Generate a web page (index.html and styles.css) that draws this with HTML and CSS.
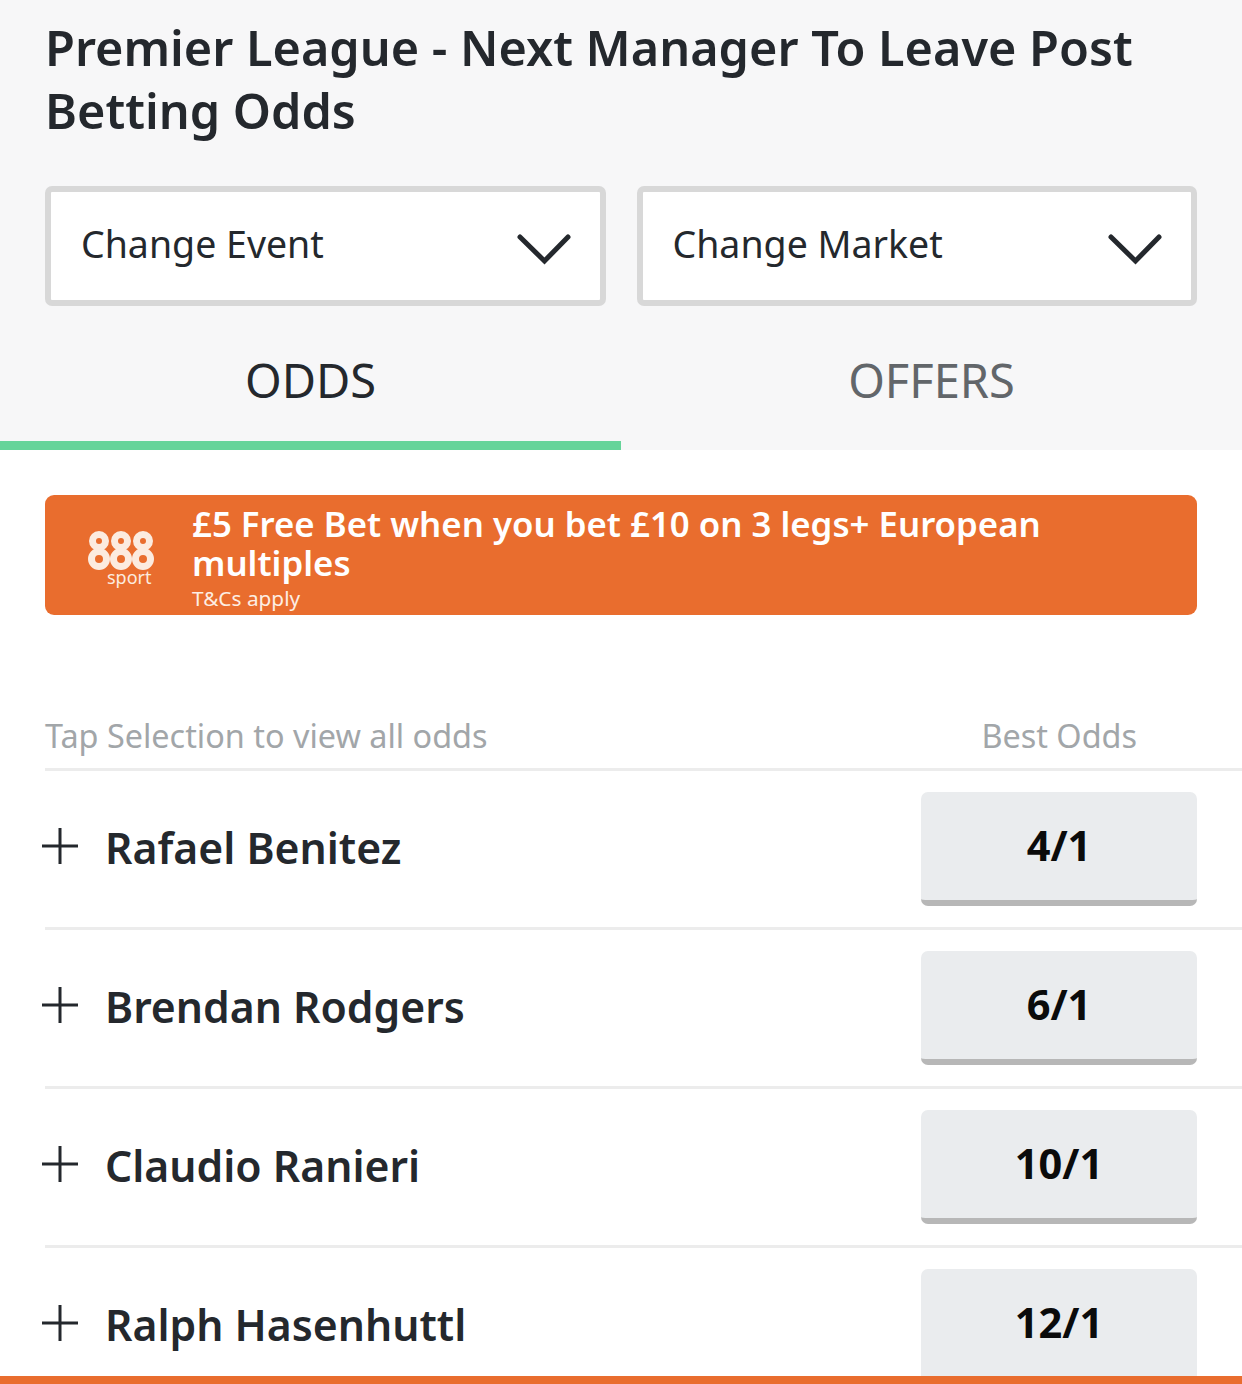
FILE: index.html
```html
<!DOCTYPE html>
<html lang="en">
<head>
<meta charset="utf-8">
<title>Premier League - Next Manager To Leave Post Betting Odds</title>
<link rel="stylesheet" href="styles.css">
</head>
<body>
<div class="page">
  <header class="head">
    <h1 class="title">Premier League - Next Manager To Leave Post Betting Odds</h1>
    <div class="selects">
      <div class="select"><span>Change Event</span>
        <svg class="chev" width="56" height="34" viewBox="0 0 56 34"><path d="M5 6 L29.5 30 L53 6" fill="none" stroke="#24282d" stroke-width="5" stroke-linecap="round"/></svg>
      </div>
      <div class="select"><span>Change Market</span>
        <svg class="chev" width="56" height="34" viewBox="0 0 56 34"><path d="M5 6 L29.5 30 L53 6" fill="none" stroke="#24282d" stroke-width="5" stroke-linecap="round"/></svg>
      </div>
    </div>
    <nav class="tabs">
      <div class="tab active">ODDS</div>
      <div class="tab">OFFERS</div>
    </nav>
  </header>
  <main class="main">
    <section class="promo">
      <div class="logo">
        <svg width="66" height="40" viewBox="0 0 66 40" fill="none" stroke="#fcebdf" stroke-width="7">
          <circle cx="11" cy="10" r="6.5"/><circle cx="11" cy="28" r="7.5"/>
          <circle cx="33" cy="10" r="6.5"/><circle cx="33" cy="28" r="7.5"/>
          <circle cx="55" cy="10" r="6.5"/><circle cx="55" cy="28" r="7.5"/>
        </svg>
        <span class="logo-sub">sport</span>
      </div>
      <div class="promo-text">
        <div class="promo-head">£5 Free Bet when you bet £10 on 3 legs+ European multiples</div>
        <div class="promo-terms">T&amp;Cs apply</div>
      </div>
    </section>
    <div class="list-head">
      <span>Tap Selection to view all odds</span>
      <span class="best">Best Odds</span>
    </div>
    <div class="row">
      <svg class="plus" width="38" height="38" viewBox="0 0 38 38"><path d="M19 1V37M1 19H37" stroke="#24282d" stroke-width="3"/></svg>
      <span class="name">Rafael Benitez</span>
      <div class="odds">4/1</div>
    </div>
    <div class="row">
      <svg class="plus" width="38" height="38" viewBox="0 0 38 38"><path d="M19 1V37M1 19H37" stroke="#24282d" stroke-width="3"/></svg>
      <span class="name">Brendan Rodgers</span>
      <div class="odds">6/1</div>
    </div>
    <div class="row">
      <svg class="plus" width="38" height="38" viewBox="0 0 38 38"><path d="M19 1V37M1 19H37" stroke="#24282d" stroke-width="3"/></svg>
      <span class="name">Claudio Ranieri</span>
      <div class="odds">10/1</div>
    </div>
    <div class="row">
      <svg class="plus" width="38" height="38" viewBox="0 0 38 38"><path d="M19 1V37M1 19H37" stroke="#24282d" stroke-width="3"/></svg>
      <span class="name">Ralph Hasenhuttl</span>
      <div class="odds">12/1</div>
    </div>
  </main>
  <div class="footer-bar"></div>
</div>
</body>
</html>
```
FILE: styles.css
```css
* { box-sizing: border-box; }
html, body { margin: 0; padding: 0; height: 100%; overflow: hidden; background: #fff; }
body { font-family: "Noto Sans", "Open Sans", sans-serif; color: #24282d; }
.page { position: relative; width: 1242px; height: 1384px; overflow: hidden; }

.head { background: #f7f7f8; height: 450px; display: flex; flex-direction: column; padding-top: 16px; }
.title { margin: 0 45px; font-size: 48.6px; line-height: 63px; font-weight: 600; height: 126px; }
.selects { display: flex; gap: 31px; margin: 44px 45px 0; }
.select { flex: 1; height: 120px; background: #fff; border: 6px solid #d8d8d8; border-radius: 7px; display: flex; align-items: center; justify-content: space-between; padding: 0 29px 5px 30px; font-size: 37.5px; }
.chev { display: block; margin-top: 9px; }
.tabs { display: flex; margin-top: auto; }
.tab { flex: 1; height: 110px; padding-bottom: 30px; display: flex; align-items: center; justify-content: center; font-size: 47px; color: #62666a; }
.tab.active { color: #24282d; box-shadow: inset 0 -9px 0 #66d49a; }

.main { padding: 45px 0 0 45px; }
.promo { width: 1152px; height: 120px; background: #e96d2e; border-radius: 9px; color: #fff; display: flex; align-items: flex-start; padding: 9px 20px 0 43px; }
.logo { width: 104px; flex: none; padding-top: 27px; display: flex; flex-direction: column; }
.logo svg { display: block; }
.logo-sub { font-size: 18px; line-height: 18px; color: #fcebdf; margin-left: 19px; margin-top: -3px; }
.promo-text { width: 900px; }
.promo-head { font-size: 34.8px; line-height: 39px; font-weight: 600; }
.promo-terms { font-size: 20.8px; line-height: 28px; margin-top: 2px; color: #fdeee3; }

.list-head { display: flex; justify-content: space-between; margin-top: 100px; height: 56px; padding-right: 105px; border-bottom: 3px solid #ececec; font-size: 32.4px; line-height: 40px; color: #a2a6a9; }
.row { position: relative; height: 159px; display: flex; align-items: flex-start; border-bottom: 3px solid #ececec; padding: 0 45px 0 0; }
.plus { position: absolute; left: -4px; top: 56px; }
.name { margin: 47px 0 0 60px; font-size: 42.7px; line-height: 60px; font-weight: 600; }
.odds { margin: 21px 0 0 auto; width: 276px; height: 114px; background: #eaecee; border-radius: 7px; border-bottom: 6px solid #b7b7b7; display: flex; align-items: center; justify-content: center; padding-bottom: 2px; font-family: "Open Sans", sans-serif; font-weight: 700; font-size: 41.5px; color: #0b0b0b; }
.footer-bar { position: absolute; left: 0; right: 0; bottom: 0; height: 8px; background: #e96d2e; }
```
